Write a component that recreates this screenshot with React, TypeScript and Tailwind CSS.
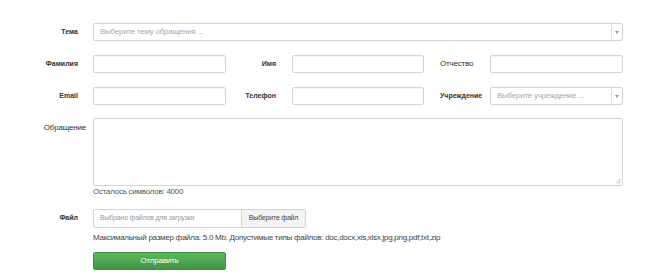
import React from "react";

const Label = ({ text, bold = true, className = "" }: { text: string; bold?: boolean; className?: string }) => (
  <div className={`text-[#333] ${bold ? "text-[7px] font-bold" : "text-[8px] tracking-[-0.2px]"} ${className}`}>{text}</div>
);

const Input = ({ className = "" }: { className?: string }) => (
  <div className={`h-[18px] border border-[#d4d4d4] rounded-[2px] bg-white shadow-[inset_0_1px_1px_rgba(0,0,0,0.06)] ${className}`} />
);

const Select = ({ placeholder, className = "" }: { placeholder: string; className?: string }) => (
  <div className={`h-[18px] flex items-center border border-[#d4d4d4] rounded-[2px] bg-white ${className}`}>
    <span className="flex-1 pl-[6px] text-[8px] tracking-[-0.25px] text-[#aaa] truncate">{placeholder}</span>
    <span className="w-[11px] h-full border-l border-[#e2e2e2] flex items-center justify-center">
      <svg width="4" height="3" viewBox="0 0 4 3">
        <path d="M0 0h4L2 3z" fill="#999" />
      </svg>
    </span>
  </div>
);

const App = () => {
  return (
    <div
      className="w-[650px] h-[279px] bg-white pt-[23px]"
      style={{ fontFamily: '"Liberation Sans", Arial, sans-serif' }}
    >
      {/* Тема */}
      <div className="flex items-center h-[18px]">
        <Label text="Тема" className="w-[78px] text-right" />
        <Select placeholder="Выберите тему обращения ..." className="ml-[15px] w-[530px]" />
      </div>

      {/* ФИО */}
      <div className="flex items-center h-[18px] mt-[14px]">
        <Label text="Фамилия" className="w-[78px] text-right" />
        <Input className="ml-[15px] w-[133px]" />
        <Label text="Имя" className="w-[50px] text-right" />
        <Input className="ml-[16px] w-[132px]" />
        <Label text="Отчество" bold={false} className="ml-[16px] w-[50px]" />
        <Input className="w-[133px]" />
      </div>

      {/* Контакты */}
      <div className="flex items-center h-[18px] mt-[14px]">
        <Label text="Email" className="w-[78px] text-right" />
        <Input className="ml-[15px] w-[133px]" />
        <Label text="Телефон" className="w-[50px] text-right" />
        <Input className="ml-[16px] w-[132px]" />
        <Label text="Учреждение" className="ml-[16px] w-[50px]" />
        <Select placeholder="Выберите учреждение ..." className="w-[133px]" />
      </div>

      {/* Обращение */}
      <div className="flex mt-[13px]">
        <Label text="Обращение" bold={false} className="w-[86px] text-right pt-[4px]" />
        <div className="ml-[7px] flex flex-col">
          <div className="relative w-[530px] h-[68px] border border-[#d4d4d4] rounded-[2px] bg-white">
            <svg className="absolute right-[1px] bottom-[1px]" width="6" height="6" viewBox="0 0 6 6">
              <path d="M1 5.5L5.5 1M3.5 5.5L5.5 3.5" stroke="#999" strokeWidth="0.8" />
            </svg>
          </div>
          <div className="text-[8px] tracking-[-0.25px] text-[#555] mt-[1px] leading-[10px]">Осталось символов: 4000</div>
        </div>
      </div>

      {/* Файл */}
      <div className="flex items-center h-[19px] mt-[12px]">
        <Label text="Файл" className="w-[78px] text-right" />
        <div className="ml-[15px] flex h-[19px] border border-[#d4d4d4] rounded-[2px] w-[213px]">
          <div className="w-[147px] flex items-center pl-[6px] text-[7px] tracking-[-0.2px] text-[#999]">Выбрано файлов для загрузки</div>
          <div className="flex-1 flex items-center justify-center border-l border-[#d4d4d4] bg-[#f3f3f3] text-[7px] tracking-[-0.2px] text-[#444]">
            Выберите файл
          </div>
        </div>
      </div>

      <div className="ml-[93px] mt-[5px] text-[8px] tracking-[-0.27px] text-[#444] leading-[10px]">
        Максимальный размер файла: 5.0 Mb. Допустимые типы файлов: doc,docx,xls,xlsx,jpg,png,pdf,txt,zip
      </div>

      <div className="ml-[93px] mt-[9px] w-[133px] h-[18px] rounded-[2px] border border-[#3e8f3e] bg-gradient-to-b from-[#5cb85c] to-[#419641] flex items-center justify-center text-[8px] tracking-[-0.2px] text-white">
        Отправить
      </div>
    </div>
  );
};

export default App;
